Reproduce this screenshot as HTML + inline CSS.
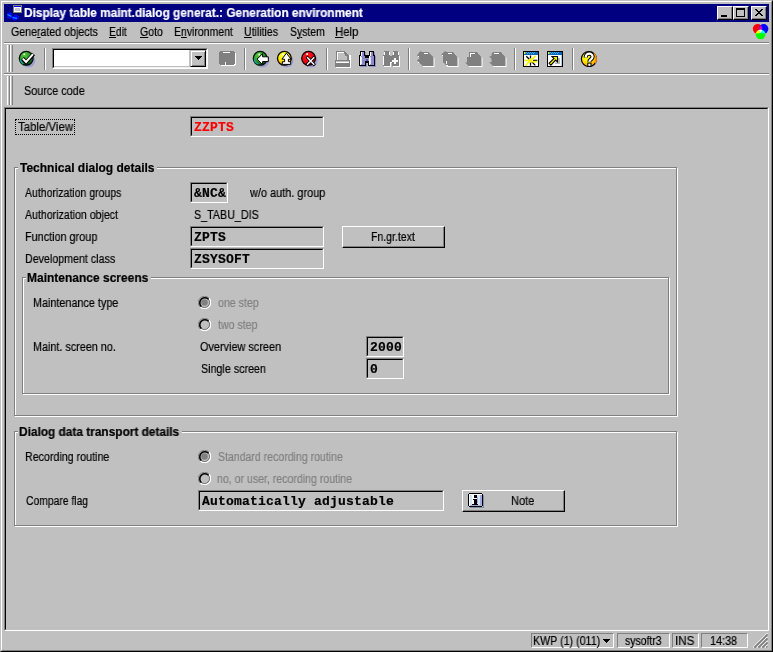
<!DOCTYPE html>
<html><head><meta charset="utf-8"><title>Display table maint.dialog generat.: Generation environment</title>
<style>
*{box-sizing:border-box;margin:0;padding:0}
html,body{width:773px;height:652px;overflow:hidden;background:#c0c0c0}
body{position:relative;font-family:"Liberation Sans",sans-serif;font-size:12px;color:#000;line-height:14px}
.a,.t,.b,.f,svg{position:absolute}
.t,.b,.f{will-change:transform}
.t{-webkit-text-stroke:.2px currentColor;white-space:pre;transform-origin:0 50%;height:14px;line-height:14px;font-size:12px}
.b{-webkit-text-stroke:.2px currentColor;white-space:pre;font-weight:bold;font-size:12px;transform-origin:0 50%;height:14px;line-height:14px}
.gap{position:absolute;background:#c0c0c0;height:4px}
.dis{color:#808080}
.f{-webkit-text-stroke:.2px currentColor;height:21px;border:1px solid;border-color:#808080 #fff #fff #808080;font-family:"Liberation Mono",monospace;font-weight:bold;font-size:13px;line-height:15px;white-space:pre;letter-spacing:.2px}
.f:before{content:"";position:absolute;left:0;top:0;right:0;bottom:0;border:1px solid;border-color:#000 #c0c0c0 #c0c0c0 #000}
.f span{position:absolute;left:3px;top:3px}
.grp{position:absolute;border:1px solid #808080;box-shadow:1px 1px 0 #fff, inset 1px 1px 0 #fff}
.vsep{position:absolute;width:2px;top:48px;height:22px;border-left:1px solid #808080;border-right:1px solid #fff}
.hsep{position:absolute;height:2px;border-top:1px solid #808080;border-bottom:1px solid #fff}
.grip{position:absolute;width:3px;border:1px solid;border-color:#fff #808080 #808080 #fff;border-top:0;border-bottom:0}
.btn{position:absolute;border:1px solid;border-color:#fff #000 #000 #fff;box-shadow:inset -1px -1px 0 #808080}
.sp{position:absolute;height:15px;top:633px;border:1px solid;border-color:#808080 #fff #fff #808080}
.rad{position:absolute;width:12px;height:12px}
u{text-decoration:underline;text-underline-offset:1px;text-decoration-thickness:1px}

</style></head><body>
<!-- window frame -->
<div class="a" style="left:0;top:0;width:773px;height:652px;border:1px solid;border-color:#c0c0c0 #000 #000 #c0c0c0"></div>
<div class="a" style="left:1px;top:1px;width:771px;height:650px;border:1px solid;border-color:#fff #808080 #808080 #fff"></div>
<!-- title bar -->
<div class="a" style="left:4px;top:4px;width:765px;height:18px;background:#000080"></div>
<!-- title buttons -->
<div class="btn" style="left:717px;top:6px;width:16px;height:14px;background:#c0c0c0"><div class="a" style="left:3px;top:8px;width:6px;height:2px;background:#000"></div></div>
<div class="btn" style="left:733px;top:6px;width:16px;height:14px;background:#c0c0c0"><div class="a" style="left:2px;top:1px;width:9px;height:9px;border:1px solid #000;border-top-width:2px"></div></div>
<div class="btn" style="left:751px;top:6px;width:16px;height:14px;background:#c0c0c0"><svg style="left:3px;top:2px" width="8" height="7" viewBox="0 0 8 7" shape-rendering="crispEdges"><path d="M0 0h2v1h1v1h2v-1h1v-1h2v1h-1v1h-1v1h-1v1h1v1h1v1h1v1h-2v-1h-1v-1h-2v1h-1v1h-2v-1h1v-1h1v-1h1v-1h-1v-1h-1v-1h-1z" fill="#000"/></svg></div>
<!-- menu sep -->
<div class="hsep" style="left:4px;top:42px;width:765px"></div>
<!-- toolbar -->
<div class="grip" style="left:7px;top:45px;height:27px"></div>
<div class="grip" style="left:10px;top:45px;height:27px"></div>
<div class="hsep" style="left:4px;top:73px;width:765px"></div>
<div class="grip" style="left:7px;top:76px;height:29px"></div>
<div class="grip" style="left:10px;top:76px;height:29px"></div>
<div class="vsep" style="left:44px"></div>
<div class="vsep" style="left:244px"></div>
<div class="vsep" style="left:326px"></div>
<div class="vsep" style="left:408px"></div>
<div class="vsep" style="left:514px"></div>
<div class="vsep" style="left:572px"></div>
<!-- combo -->
<div class="a" style="left:52px;top:48px;width:156px;height:21px;border:1px solid;border-color:#808080 #fff #fff #808080;background:#fff"><div class="a" style="left:0;top:0;right:0;bottom:0;border:1px solid;border-color:#000 #f0f0f0 #f0f0f0 #000"></div><div class="a" style="left:136px;top:1px;width:1px;height:17px;background:#c0c0c0"></div><div class="a" style="left:1px;top:17px;width:136px;height:1px;background:#c0c0c0"></div>
<div class="a" style="left:137px;top:1px;width:16px;height:17px;background:#c0c0c0;border:1px solid;border-color:#c0c0c0 #000 #000 #c0c0c0;box-shadow:inset 1px 1px 0 #fff, inset -1px -1px 0 #808080"><svg style="left:4px;top:5px" width="7" height="4" viewBox="0 0 7 4" shape-rendering="crispEdges"><path d="M0 0h7v1h-1v1h-1v1h-1v1h-1v-1h-1v-1h-1v-1h-1z"/></svg></div></div>
<svg style="left:0;top:44px" width="773" height="29" viewBox="0 44 773 29">
<defs>
<radialGradient id="gG" cx="35%" cy="25%" r="80%"><stop offset="0" stop-color="#5ac83c"/><stop offset=".55" stop-color="#2a9a2a"/><stop offset="1" stop-color="#0a5010"/></radialGradient>
<radialGradient id="gY" cx="40%" cy="25%" r="80%"><stop offset="0" stop-color="#ffff30"/><stop offset=".5" stop-color="#ffee00"/><stop offset="1" stop-color="#ff9000"/></radialGradient>
<radialGradient id="gR" cx="40%" cy="30%" r="80%"><stop offset="0" stop-color="#ff2020"/><stop offset=".6" stop-color="#f00010"/><stop offset="1" stop-color="#a00010"/></radialGradient>
</defs>
<!-- check -->
<circle cx="28.4" cy="60.6" r="6.8" fill="#9c9cd0"/>
<circle cx="26.2" cy="58.3" r="6.9" fill="url(#gG)" stroke="#001400" stroke-width="1.3"/>
<path d="M20.3 59.5a6 6 0 0 0 3 4.6" stroke="#18a0a0" stroke-width="1.4" fill="none"/>
<path d="M22.5 58.5l3.6 3.8l7.4-8.3" stroke="#000" stroke-width="4" fill="none" stroke-linejoin="miter"/>
<path d="M22.8 58.6l3.3 3.4l6.9-7.8" stroke="#fff" stroke-width="2" fill="none"/>
<rect x="23.5" y="53.5" width="1.6" height="1.6" fill="#fff"/>
<!-- back -->
<circle cx="262.4" cy="60.6" r="6.8" fill="#9c9cd0"/>
<circle cx="260.2" cy="58.3" r="6.9" fill="url(#gG)" stroke="#001400" stroke-width="1.3"/>
<path d="M254.3 58.5a6 6 0 0 0 4 5.6" stroke="#18a0a0" stroke-width="1.4" fill="none"/>
<path d="M257 59.200l5.600-5.500v3.100h5.700v4.800h-5.700v3.100z" fill="#fff" stroke="#000" stroke-width="1"/>
<rect x="258.4" y="53.6" width="1.7" height="1.7" fill="#fff"/>
<!-- exit -->
<circle cx="286.6" cy="60.6" r="6.8" fill="#9c9cd0"/>
<circle cx="284.4" cy="58.3" r="6.9" fill="url(#gY)" stroke="#100800" stroke-width="1.3"/>
<path d="M286.400 53.200l4.700 6h-2.700v2.500h2.300v2.700h-8.400v-2.700h2.300v-2.500h-2.700z" fill="#fff" stroke="#000" stroke-width="1"/>
<rect x="282.3" y="53.6" width="1.7" height="1.7" fill="#fff"/>
<!-- cancel -->
<circle cx="310.8" cy="60.6" r="6.8" fill="#9c9cd0"/>
<circle cx="308.6" cy="58.3" r="6.9" fill="url(#gR)" stroke="#180000" stroke-width="1.3"/>
<path d="M307.600 57.700l6.200 6.600M313.800 57.700l-6.200 6.600" stroke="#000" stroke-width="3" stroke-linecap="square"/>
<path d="M307.600 57.700l6.200 6.600M313.800 57.700l-6.200 6.600" stroke="#fff" stroke-width="1.400" stroke-linecap="square"/>
<rect x="306.3" y="53.2" width="1.7" height="1.7" fill="#fff"/>
<!-- save (disabled) -->
<g shape-rendering="crispEdges">
<path d="M221 52h14v1h1v12h-1v1h-14v-1h-1v-12h1z" fill="#fff"/>
<path d="M220 51h14v1h1v12h-1v1h-14v-1h-1v-12h1z" fill="#808080"/>
<rect x="223" y="52" width="7" height="1" fill="#fff"/>
<rect x="225" y="62" width="1" height="3" fill="#fff"/>
</g>
<!-- print (disabled) -->
<g shape-rendering="crispEdges">
<rect x="349" y="55" width="2" height="6" fill="#fff"/>
<path d="M336 51h9v1h1v1h1v1h1v1h1v6h-2v-5h-1v-1h-1v-1h-1v-1h-7v8h-1z" fill="#808080"/>
<path d="M344 52h1v1h1v1h1v1h1v1h-3z" fill="#808080"/>
<path d="M337 52h7v1h-6v7h-1z" fill="#fff"/>
<rect x="336" y="61" width="15" height="7" fill="#fff"/>
<rect x="335" y="60" width="15" height="7" fill="#808080"/>
<rect x="336" y="61" width="13" height="2" fill="#c0c0c0"/>
<rect x="336" y="62" width="13" height="1" fill="#fff"/>
</g>
<!-- find -->
<g shape-rendering="crispEdges">
<path d="M361 52h5v4h1v11h-7v-11h1zM370 52h5v4h1v11h-7v-11h1z" fill="#9090cc"/>
<path d="M360 51h5v4h4v-4h5v4h1v11h-7v-3h-2v3h-7v-11h1z" fill="#000"/>
<path d="M361 52h3v4h1v9h-5v-9h1zM370 52h3v4h1v9h-5v-9h1z" fill="#8c8cc8"/>
<rect x="365" y="58" width="4" height="3" fill="#8c8cc8"/>
<rect x="366" y="59" width="2" height="2" fill="#5858a8"/>
<path d="M361 52h1v4h-1v9h-1v-9h1zM370 52h1v4h-1v9h-1v-9h1z" fill="#fff"/>
<rect x="361" y="57" width="1" height="7" fill="#e0e0f8"/>
<rect x="370" y="57" width="1" height="7" fill="#e0e0f8"/>
</g>
<!-- find next (disabled) -->
<g shape-rendering="crispEdges">
<path d="M385 52h5v4h1v1h2v-1h1v-4h5v4h1v11h-7v-4h-2v4h-7v-11h1z" fill="#fff"/>
<path d="M384 51h5v4h1v1h2v-1h1v-4h5v4h1v11h-7v-4h-2v4h-7v-11h1z" fill="#808080"/>
<rect x="384" y="52" width="1" height="3" fill="#fff"/>
<rect x="383" y="56" width="1" height="9" fill="#fff"/>
<rect x="389" y="52" width="1" height="3" fill="#fff"/>
<rect x="393" y="52" width="1" height="3" fill="#fff"/>
<rect x="392" y="60" width="6" height="2" fill="#fff"/>
<rect x="394" y="58" width="2" height="6" fill="#fff"/>
</g>
<!-- page icons (disabled) -->
<g>
<path d="M420.500 51L422 52H428.500L433.500 57V66H422.500L417 60.500L419.500 58.200L417 55.200Z" fill="#fff" transform="translate(1 1)"/><path d="M420.500 51L422 52H428.500L433.500 57V66H422.500L417 60.500L419.500 58.200L417 55.200Z" fill="#808080"/><g shape-rendering="crispEdges" fill="#fff"><rect x="424" y="53" width="4" height="1"/><rect x="418" y="56" width="1" height="1"/><rect x="418" y="62" width="1" height="1"/></g>
<path d="M445 51L446.500 52H453L457.500 57V66H446.500L443 62V56.500L441.200 54.700Z" fill="#fff" transform="translate(1 1)"/><path d="M445 51L446.500 52H453L457.500 57V66H446.500L443 62V56.500L441.200 54.700Z" fill="#808080"/><g shape-rendering="crispEdges" fill="#fff"><rect x="448" y="53" width="4" height="1"/><rect x="442" y="55" width="1" height="1"/><rect x="446" y="61" width="1" height="3"/><rect x="446" y="65" width="2" height="1"/></g>
<path d="M469 52H477L481.500 57V66H468.400L465 62.500H467V57H469Z" fill="#fff" transform="translate(1 1)"/><path d="M469 52H477L481.500 57V66H468.400L465 62.500H467V57H469Z" fill="#808080"/><g shape-rendering="crispEdges" fill="#fff"><rect x="470" y="53" width="5" height="1"/><rect x="470" y="53" width="1" height="4"/></g>
<path d="M493 52H501L505.500 57V66H492.700L489 62.200H491.500V59L489 56.200H491.500V54Z" fill="#fff" transform="translate(1 1)"/><path d="M493 52H501L505.500 57V66H492.700L489 62.200H491.500V59L489 56.200H491.500V54Z" fill="#808080"/><g shape-rendering="crispEdges" fill="#fff"><rect x="494" y="53" width="5" height="1"/></g>
</g>
<!-- new session -->
<g shape-rendering="crispEdges">
<rect x="523" y="51" width="16" height="16" fill="#000"/>
<rect x="524" y="52" width="14" height="14" fill="#fff"/>
<rect x="524" y="52" width="14" height="3" fill="#0868b8"/>
<path d="M526 52h1v1h1v-1h1v1h1v-1h1v1h1v-1h1v1h1v-1h1v1h-1v1h-1v-1h-1v1h-1v-1h-1v1h-1v-1h-1v1h-1v-1h-1v1h-1v-1h-1z" fill="#58a0d8"/>
<rect x="524" y="52" width="1" height="2" fill="#f0f000"/>
</g>
<g stroke-width="1.300" fill="none">
<path d="M530.500 55.600v3M530.500 62.500v3.300M526.300 56.300l3 3M532 62l3.300 3.400M533 60.300h4.300" stroke="#000"/>
<path d="M524.300 60.500h5.500M531 60l4.600-4.200M530 61l-4.700 4.600M532 61.600h5.300" stroke="#f4f400" stroke-width="1.600"/>
<circle cx="530.500" cy="60.500" r="2" fill="#f4f400" stroke="none"/>
</g>
<!-- shortcut -->
<g shape-rendering="crispEdges">
<rect x="547" y="51" width="16" height="16" fill="#000"/>
<rect x="548" y="52" width="14" height="14" fill="#fff"/>
<rect x="548" y="52" width="14" height="3" fill="#0868b8"/>
<path d="M550 52h1v1h1v-1h1v1h1v-1h1v1h1v-1h1v1h1v-1h1v1h-1v1h-1v-1h-1v1h-1v-1h-1v1h-1v-1h-1v1h-1v-1h-1v1h-1v-1h-1z" fill="#58a0d8"/>
<rect x="548" y="52" width="1" height="2" fill="#f0f000"/>
<rect x="555" y="58" width="5" height="6" fill="#d8d8d8"/>
<rect x="558" y="58" width="2" height="6" fill="#b8b8b8"/>
<rect x="555" y="63" width="5" height="1" fill="#b8b8b8"/>
<rect x="561" y="55" width="1" height="11" fill="#a8c8f0"/>
</g>
<path d="M552 56.500h5.500v5.500l-1.900-1.900l-4.700 5l-1.800-1.800l4.900-4.800z" fill="#f4f400" stroke="#000" stroke-width="1.100"/>
<!-- help -->
<circle cx="590" cy="60" r="7.3" fill="#9c9cd0"/>
<circle cx="588.900" cy="59" r="7.500" fill="url(#gY)" stroke="#000" stroke-width="1.2"/>
<path d="M593.500 53.500a7.500 7.500 0 0 1 1.500 9.500" stroke="#ff9000" stroke-width="1.800" fill="none"/>
<path d="M585.800 57.600v-.800a3.300 3 0 0 1 6.800 0c0 2.600-3.200 2.400-3.200 5" stroke="#000" stroke-width="4.200" fill="none"/>
<rect x="587.300" y="62.600" width="4.200" height="4.200" fill="#000"/>
<path d="M585.800 57.600v-.800a3.300 3 0 0 1 6.800 0c0 2.600-3.200 2.400-3.200 5" stroke="#fff" stroke-width="2.200" fill="none"/>
<rect x="588.300" y="63.600" width="2.200" height="2.200" fill="#fff"/>
</svg>

<!-- content area -->
<div class="a" style="left:4px;top:107px;width:765px;height:524px;border:1px solid;border-color:#808080 #fff #fff #808080"></div>
<div class="a" style="left:5px;top:108px;width:763px;height:522px;border:1px solid;border-color:#000 #c0c0c0 #c0c0c0 #000"></div>
<!-- focus rect -->
<div class="a" style="left:15px;top:119px;width:60px;height:16px;border:1px dotted #000"></div>
<!-- groups -->
<div class="grp" style="left:14px;top:167px;width:663px;height:249px"></div>
<div class="grp" style="left:22px;top:277px;width:647px;height:117px"></div>
<div class="grp" style="left:14px;top:431px;width:663px;height:95px"></div>
<div class="gap" style="left:18px;top:166px;width:139px"></div>
<div class="gap" style="left:26px;top:276px;width:125px"></div>
<div class="gap" style="left:18px;top:430px;width:164px"></div>
<!-- fields -->
<div class="f" style="left:190px;top:116px;width:134px;color:#f00"><span>ZZPTS</span></div>
<div class="f" style="left:190px;top:182px;width:38px"><span>&amp;NC&amp;</span></div>
<div class="f" style="left:190px;top:226px;width:134px"><span>ZPTS</span></div>
<div class="f" style="left:190px;top:248px;width:134px"><span>ZSYSOFT</span></div>
<div class="f" style="left:366px;top:336px;width:38px"><span>2000</span></div>
<div class="f" style="left:366px;top:358px;width:38px"><span>0</span></div>
<div class="f" style="left:198px;top:490px;width:246px"><span>Automatically adjustable</span></div>
<!-- buttons -->
<div class="btn" style="left:342px;top:226px;width:103px;height:22px"></div>
<div class="btn" style="left:462px;top:490px;width:103px;height:22px"></div>
<!-- status bar -->
<div class="sp" style="left:531px;width:83px"></div>
<div class="sp" style="left:617px;width:53px"></div>
<div class="sp" style="left:672px;width:27px"></div>
<div class="sp" style="left:701px;width:47px"></div>
<!-- SAP logo -->
<svg style="left:750px;top:22px" width="20" height="20" viewBox="750 22 20 20">
<defs>
<clipPath id="cR"><circle cx="757.6" cy="28.8" r="4.8"/></clipPath>
<clipPath id="cB"><circle cx="763.6" cy="28.8" r="4.8"/></clipPath>
</defs>
<circle cx="757.6" cy="28.8" r="4.800" fill="#f00"/>
<circle cx="763.6" cy="28.8" r="4.800" fill="#00f"/>
<circle cx="760.6" cy="34.5" r="4.800" fill="#0f0"/>
<circle cx="763.6" cy="28.8" r="4.800" fill="#c000c0" clip-path="url(#cR)"/>
<circle cx="760.6" cy="34.5" r="4.800" fill="#ff0" clip-path="url(#cR)"/>
<circle cx="760.6" cy="34.5" r="4.800" fill="#0ff" clip-path="url(#cB)"/>
<g clip-path="url(#cB)"><circle cx="760.6" cy="34.5" r="4.800" fill="#fff" clip-path="url(#cR)"/></g>
</svg>
<!-- title icon -->
<svg style="left:4px;top:4px" width="20" height="18" viewBox="4 4 20 18" shape-rendering="crispEdges">
<rect x="13" y="5" width="9" height="8" fill="#808078"/>
<rect x="14" y="6" width="7" height="6" fill="#fff"/>
<rect x="14" y="6" width="7" height="1" fill="#0000ff"/>
<rect x="15" y="8" width="5" height="3" fill="#c8c8d0"/>
<g shape-rendering="auto">
<path d="M6.500 13.500l3-2.200l3.500 1.500v5.500l-2.500 1.700l-4-2z" fill="#0000ff" stroke="#000" stroke-width="1" stroke-dasharray="1 1"/>
<path d="M11.500 16.500l4-2.500l4 1.800v3l-4.500 2.700l-3.500-1.500z" fill="#0000ff" stroke="#000" stroke-width="1" stroke-dasharray="1 1"/>
<path d="M7.500 14.500l4 2M12.500 17.500l4.500 .8" stroke="#00a0ff" stroke-width="1.200"/>
</g>
</svg>
<!-- radios -->
<svg style="left:198px;top:296px" width="13" height="13" viewBox="0 0 13 13"><path d="M2.100 10.900A6.200 6.200 0 0 1 10.900 2.100" stroke="#808080" stroke-width="1" fill="none"/>
<path d="M10.900 2.100A6.200 6.200 0 0 1 2.100 10.900" stroke="#fff" stroke-width="1.200" fill="none"/>
<circle cx="6.500" cy="6.500" r="5" stroke="#505050" stroke-width=".7" fill="none"/><path d="M3.300 10.600A5.100 5.100 0 0 1 10.600 3.300" stroke="#000" stroke-width="1.500" fill="none"/>
<circle cx="6.500" cy="6.500" r="3.300" fill="#808080"/></svg>
<svg style="left:198px;top:318px" width="13" height="13" viewBox="0 0 13 13"><path d="M2.100 10.900A6.200 6.200 0 0 1 10.900 2.100" stroke="#808080" stroke-width="1" fill="none"/>
<path d="M10.900 2.100A6.200 6.200 0 0 1 2.100 10.900" stroke="#fff" stroke-width="1.200" fill="none"/>
<circle cx="6.500" cy="6.500" r="5" stroke="#505050" stroke-width=".7" fill="none"/><path d="M3.300 10.600A5.100 5.100 0 0 1 10.600 3.300" stroke="#000" stroke-width="1.500" fill="none"/></svg>
<svg style="left:198px;top:450px" width="13" height="13" viewBox="0 0 13 13"><path d="M2.100 10.900A6.200 6.200 0 0 1 10.900 2.100" stroke="#808080" stroke-width="1" fill="none"/>
<path d="M10.900 2.100A6.200 6.200 0 0 1 2.100 10.900" stroke="#fff" stroke-width="1.200" fill="none"/>
<circle cx="6.500" cy="6.500" r="5" stroke="#505050" stroke-width=".7" fill="none"/><path d="M3.300 10.600A5.100 5.100 0 0 1 10.600 3.300" stroke="#000" stroke-width="1.500" fill="none"/>
<circle cx="6.500" cy="6.500" r="3.300" fill="#808080"/></svg>
<svg style="left:198px;top:472px" width="13" height="13" viewBox="0 0 13 13"><path d="M2.100 10.900A6.200 6.200 0 0 1 10.900 2.100" stroke="#808080" stroke-width="1" fill="none"/>
<path d="M10.900 2.100A6.200 6.200 0 0 1 2.100 10.900" stroke="#fff" stroke-width="1.200" fill="none"/>
<circle cx="6.500" cy="6.500" r="5" stroke="#505050" stroke-width=".7" fill="none"/><path d="M3.300 10.600A5.100 5.100 0 0 1 10.600 3.300" stroke="#000" stroke-width="1.500" fill="none"/></svg>
<!-- note icon -->
<svg style="left:468px;top:493px" width="17" height="16" viewBox="0 0 17 16" shape-rendering="crispEdges">
<path d="M2 14h13v-12h1v13h-14z" fill="#7890a8"/>
<path d="M1 0h13v1h1v12h-1v1h-13v-1h-1v-12h1z" fill="#000"/>
<rect x="1" y="1" width="13" height="12" fill="#fff"/>
<rect x="2" y="2" width="2" height="10" fill="#d0e4f8"/>
<rect x="9" y="2" width="3" height="10" fill="#d0e4f8"/>
<rect x="12" y="2" width="2" height="11" fill="#a8a8dc"/>
<rect x="2" y="12" width="12" height="1" fill="#a8a8dc"/>
<rect x="6" y="2" width="3" height="3" fill="#000"/>
<path d="M5 6h4v5h1v1h-6v-1h2v-4h-1z" fill="#000"/>
<rect x="9" y="4" width="1" height="6" fill="#a8a8dc"/>
</svg>
<!-- status arrow -->
<svg style="left:603px;top:639px" width="7" height="4" viewBox="0 0 7 4" shape-rendering="crispEdges"><path d="M0 0h7v1h-1v1h-1v1h-1v1h-1v-1h-1v-1h-1v-1h-1z"/></svg>
<!-- resize grip -->
<svg style="left:753px;top:633px" width="16" height="16" viewBox="0 0 16 16">
<g stroke-width="1.100">
<path d="M0 14.500L14.500 0" stroke="#fff"/><path d="M1 14.500L14.500 1M2 14.500L14.500 2" stroke="#808080"/>
<path d="M4 14.500L14.500 4" stroke="#fff"/><path d="M5 14.500L14.500 5M6 14.500L14.500 6" stroke="#808080"/>
<path d="M8 14.500L14.500 8" stroke="#fff"/><path d="M9 14.500L14.500 9M10 14.500L14.500 10" stroke="#808080"/>
<path d="M12 14.500L14.500 12" stroke="#fff"/><path d="M13 14.500L14.500 13" stroke="#808080"/>
</g>
</svg>

<div class="t" style="left:10.50px;top:25px;transform:scaleX(0.8855)">Gene<u>r</u>ated objects</div>
<div class="t" style="left:109.19px;top:25px;transform:scaleX(0.8594)"><u>E</u>dit</div>
<div class="t" style="left:139.50px;top:25px;transform:scaleX(0.8812)"><u>G</u>oto</div>
<div class="t" style="left:174.18px;top:25px;transform:scaleX(0.8726)">E<u>n</u>vironment</div>
<div class="t" style="left:244.34px;top:25px;transform:scaleX(0.8789)"><u>U</u>tilities</div>
<div class="t" style="left:289.67px;top:25px;transform:scaleX(0.8715)">S<u>y</u>stem</div>
<div class="t" style="left:335.11px;top:25px;transform:scaleX(0.9460)"><u>H</u>elp</div>
<div class="t" style="left:23.66px;top:84px;transform:scaleX(0.9020)">Source code</div>
<div class="t" style="left:17.82px;top:120px;transform:scaleX(0.9520)">Table/View</div>
<div class="t" style="left:25.00px;top:186px;transform:scaleX(0.8752)">Authorization groups</div>
<div class="t" style="left:25.00px;top:208px;transform:scaleX(0.8820)">Authorization object</div>
<div class="t" style="left:25.15px;top:230px;transform:scaleX(0.9030)">Function group</div>
<div class="t" style="left:25.17px;top:252px;transform:scaleX(0.8894)">Development class</div>
<div class="t" style="left:250.17px;top:186px;transform:scaleX(0.9099)">w/o auth. group</div>
<div class="t" style="left:193.66px;top:208px;transform:scaleX(0.8940)">S_TABU_DIS</div>
<div class="t" style="left:371.18px;top:230px;transform:scaleX(0.8753)">Fn.gr.text</div>
<div class="t" style="left:33.16px;top:296px;transform:scaleX(0.9003)">Maintenance type</div>
<div class="t" style="left:33.16px;top:340px;transform:scaleX(0.8998)">Maint. screen no.</div>
<div class="t dis" style="left:217.67px;top:296px;transform:scaleX(0.8854)">one step</div>
<div class="t dis" style="left:218.00px;top:318px;transform:scaleX(0.8823)">two step</div>
<div class="t" style="left:200.49px;top:340px;transform:scaleX(0.9078)">Overview screen</div>
<div class="t" style="left:200.67px;top:362px;transform:scaleX(0.8931)">Single screen</div>
<div class="t" style="left:25.17px;top:450px;transform:scaleX(0.8896)">Recording routine</div>
<div class="t" style="left:25.52px;top:494px;transform:scaleX(0.8616)">Compare flag</div>
<div class="t dis" style="left:217.67px;top:450px;transform:scaleX(0.8780)">Standard recording routine</div>
<div class="t dis" style="left:217.34px;top:472px;transform:scaleX(0.8805)">no, or user, recording routine</div>
<div class="t" style="left:511.14px;top:494px;transform:scaleX(0.9196)">Note</div>
<div class="t" style="left:533.17px;top:634px;transform:scaleX(0.8891)">KWP (1) (011)</div>
<div class="t" style="left:624.84px;top:634px;transform:scaleX(0.8709)">sysoftr3</div>
<div class="t" style="left:675.09px;top:634px;transform:scaleX(0.9697)">INS</div>
<div class="t" style="left:710.32px;top:634px;transform:scaleX(0.9030)">14:38</div>
<div class="b" style="left:24.26px;top:6px;transform:scaleX(0.9847);color:#fff">Display table maint.dialog generat.: Generation environment</div>
<div class="b" style="left:20.00px;top:161px;transform:scaleX(1.0001)">Technical dialog details</div>
<div class="b" style="left:27.25px;top:271px;transform:scaleX(0.9987)">Maintenance screens</div>
<div class="b" style="left:19.26px;top:425px;transform:scaleX(0.9888)">Dialog data transport details</div>

</body></html>
